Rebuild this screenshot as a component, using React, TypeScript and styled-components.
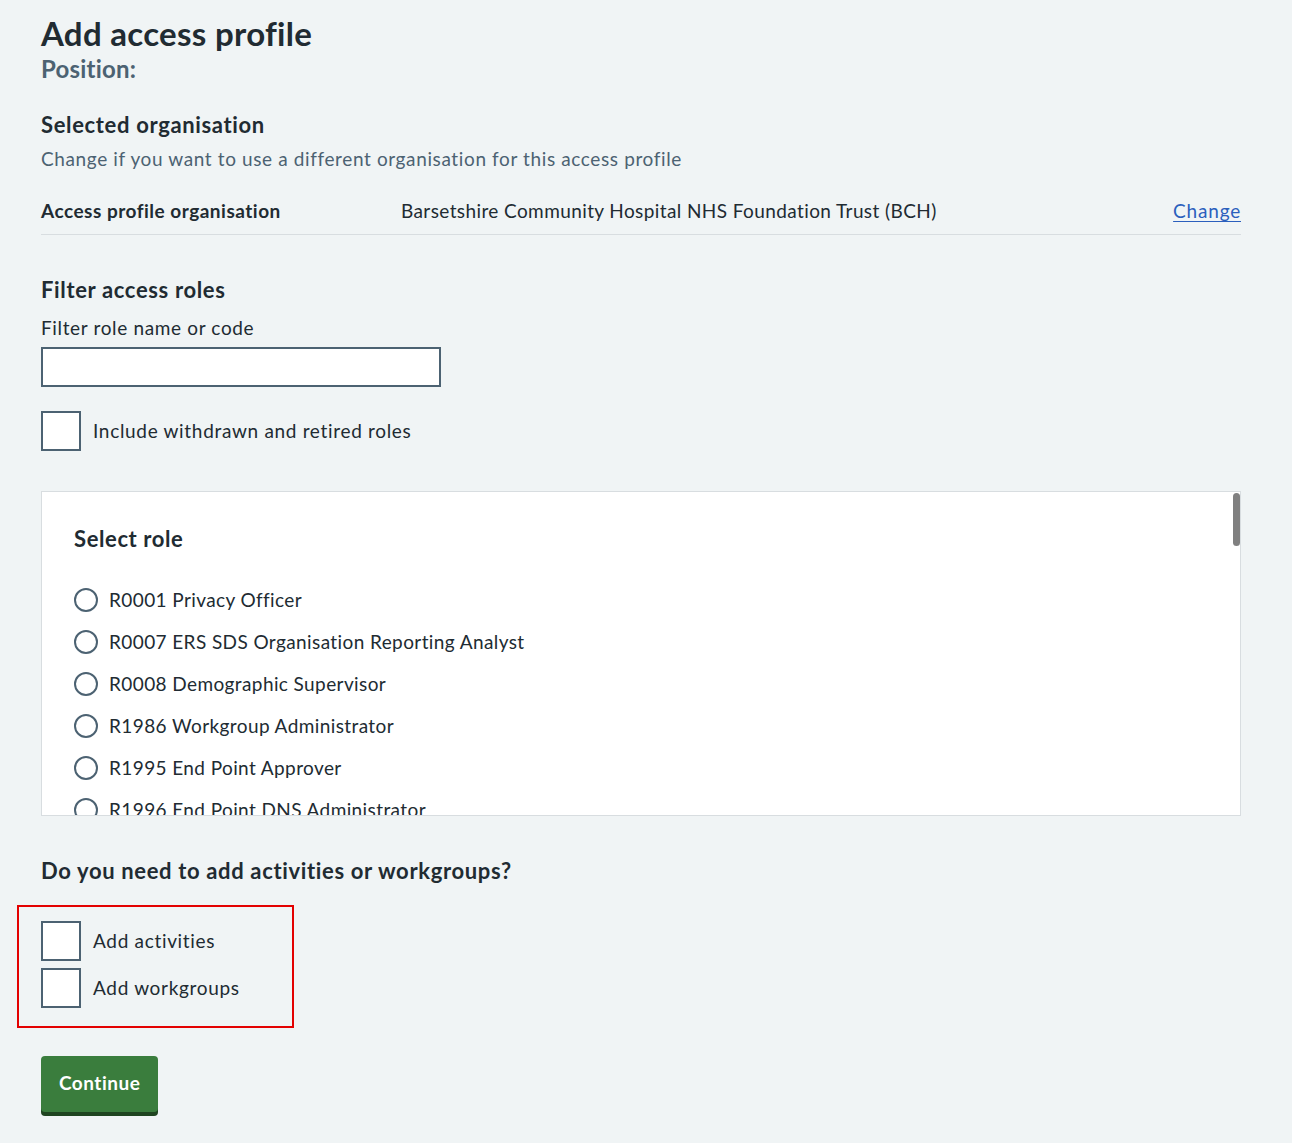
import styled, { createGlobalStyle } from 'styled-components';

const roles = [
  'R0001 Privacy Officer',
  'R0007 ERS SDS Organisation Reporting Analyst',
  'R0008 Demographic Supervisor',
  'R1986 Workgroup Administrator',
  'R1995 End Point Approver',
  'R1996 End Point DNS Administrator',
  'R1997 End Point Requester',
  'R1998 Registration Authority Manager',
  'R1999 Registration Authority Agent',
  'R5000 Sponsor',
  'R5010 Local Smartcard Administrator',
  'R5080 Referring Clinician',
  'R5090 Referring Admin',
  'R5100 Booking Admin',
  'R5110 Service Provider Clinician',
  'R5120 Service Provider Admin',
  'R5130 Service Provider Clinician Admin',
  'R5140 Service Definer',
  'R5150 Directory of Service Manager',
  'R5160 Pharmacist',
  'R5170 Dispenser',
  'R5180 Pharmacy Technician',
  'R5190 Registration Clerk',
  'R5200 Patient Services Clerk',
  'R5210 Medical Secretary',
  'R5220 Receptionist',
  'R5230 Clinical Coder',
  'R5240 Information Analyst',
  'R5250 Data Quality Officer',
  'R5260 Caldicott Guardian',
  'R5270 Records Manager',
  'R8000 Clinical Practitioner Access Role',
  'R8001 Nurse Access Role',
  'R8002 Nurse Manager Access Role',
  'R8003 Health Professional Access Role',
  'R8004 Healthcare Student Access Role',
  'R8005 Biomedical Scientist Access Role',
  'R8006 Medical Secretary Access Role',
  'R8007 Clinical Coder Access Role',
  'R8008 Admin/Clinical Support Access Role',
  'R8009 Receptionist Access Role',
  'R8010 Clerical Access Role',
  'R8011 Clerical Manager Access Role',
  'R8012 Information Officer Access Role',
  'R8013 Health Records Manager Access Role',
];

const GlobalStyle = createGlobalStyle`
  * { box-sizing: border-box; }
  body {
    margin: 0;
    background: #f0f4f5;
    color: #212b32;
    font-family: Lato, "Liberation Sans", Arial, sans-serif;
    letter-spacing: 0.5px;
  }
`;

const Page = styled.main`
  width: 1200px;
  margin-left: 41px;
  padding: 13px 0 28px;
`;

const Title = styled.h1`
  margin: 0;
  font-size: 33px;
  line-height: 40px;
  font-weight: 700;
  letter-spacing: 0.3px;
`;

const Caption = styled.div`
  font-size: 24px;
  line-height: 32px;
  font-weight: 700;
  color: #4c6272;
  letter-spacing: 0.2px;
`;

const Heading = styled.h2<{ $top: number }>`
  margin: ${(p) => p.$top}px 0 0;
  font-size: 22px;
  line-height: 30px;
  font-weight: 700;
  letter-spacing: 0.65px;
`;

const Hint = styled.p`
  margin: 5px 0 0;
  font-size: 19px;
  line-height: 28px;
  color: #4c6272;
  letter-spacing: 0.62px;
`;

const SummaryRow = styled.dl`
  display: flex;
  align-items: center;
  margin: 12px 0 0;
  padding: 12px 0 9px;
  border-bottom: 1px solid #d8dde0;
  font-size: 19px;
  line-height: 28px;
`;

const Key = styled.dt`
  width: 360px;
  font-weight: 700;
`;

const Value = styled.dd`
  flex: 1;
  margin: 0;
  letter-spacing: 0.4px;
`;

const ChangeLink = styled.a`
  color: #2b5fbd;
  text-decoration: underline;
  text-underline-offset: 3px;
  text-decoration-thickness: 1px;
  letter-spacing: 0.8px;
`;

const Label = styled.label`
  display: block;
  margin-top: 9px;
  font-size: 19px;
  line-height: 28px;
  letter-spacing: 0.65px;
`;

const TextInput = styled.input`
  display: block;
  margin-top: 5px;
  width: 400px;
  height: 40px;
  border: 2px solid #4c6272;
  background: #fff;
  font: inherit;
  font-size: 19px;
  padding: 4px;
`;

const CheckRow = styled.label<{ $top?: number }>`
  display: flex;
  align-items: center;
  gap: 12px;
  margin-top: ${(p) => p.$top ?? 0}px;
  font-size: 19px;
  line-height: 28px;
  letter-spacing: 0.68px;
`;

const CheckBox = styled.span`
  width: 40px;
  height: 40px;
  flex: none;
  border: 2px solid #4c6272;
  background: #fff;
`;

const PanelFrame = styled.div`
  position: relative;
  margin-top: 40px;
`;

const RolePanel = styled.div`
  height: 325px;
  overflow-y: auto;
  scrollbar-width: none;
  background: #fff;
  border: 1px solid #d8dde0;
  padding: 32px 32px 24px;
`;

const ScrollThumb = styled.div`
  position: absolute;
  top: 2px;
  right: 1px;
  width: 7px;
  height: 53px;
  border-radius: 4px;
  background: #808080;
`;

const PanelHeading = styled.h3`
  margin: 0 0 32px;
  font-size: 22px;
  line-height: 30px;
  font-weight: 700;
  letter-spacing: 0.6px;
`;

const RadioList = styled.div`
  display: flex;
  flex-direction: column;
  gap: 14px;
`;

const RadioRow = styled.label`
  display: flex;
  align-items: center;
  gap: 11px;
  font-size: 19px;
  line-height: 28px;
  letter-spacing: 0.4px;
`;

const RadioCircle = styled.span`
  width: 24px;
  height: 24px;
  flex: none;
  border: 2px solid #4c6272;
  border-radius: 50%;
  background: #fff;
`;

const Highlight = styled.div`
  display: flex;
  flex-direction: column;
  gap: 7px;
  width: 277px;
  margin: 19px 0 0 -24px;
  padding: 14px 0 18px 22px;
  border: 2px solid #e30000;
`;

const Button = styled.button`
  display: block;
  margin-top: 28px;
  padding: 13px 18px 15px;
  border: 0;
  border-radius: 4px;
  background: #3a7d3d;
  box-shadow: 0 4px 0 #1f4420;
  color: #fff;
  font-family: inherit;
  font-size: 19px;
  line-height: 28px;
  font-weight: 700;
  letter-spacing: 0.5px;
  cursor: pointer;
`;

export default function App() {
  return (
    <>
      <GlobalStyle />
      <Page>
        <Title>Add access profile</Title>
        <Caption>Position:</Caption>

        <Heading $top={25}>Selected organisation</Heading>
        <Hint>Change if you want to use a different organisation for this access profile</Hint>
        <SummaryRow>
          <Key>Access profile organisation</Key>
          <Value>Barsetshire Community Hospital NHS Foundation Trust (BCH)</Value>
          <ChangeLink href="#">Change</ChangeLink>
        </SummaryRow>

        <Heading $top={40}>Filter access roles</Heading>
        <Label htmlFor="filter">Filter role name or code</Label>
        <TextInput id="filter" type="text" />
        <CheckRow $top={24}>
          <CheckBox />
          Include withdrawn and retired roles
        </CheckRow>

        <PanelFrame>
          <RolePanel>
            <PanelHeading>Select role</PanelHeading>
            <RadioList>
              {roles.map((role) => (
                <RadioRow key={role}>
                  <RadioCircle />
                  {role}
                </RadioRow>
              ))}
            </RadioList>
          </RolePanel>
          <ScrollThumb />
        </PanelFrame>

        <Heading $top={40}>Do you need to add activities or workgroups?</Heading>
        <Highlight>
          <CheckRow>
            <CheckBox />
            Add activities
          </CheckRow>
          <CheckRow>
            <CheckBox />
            Add workgroups
          </CheckRow>
        </Highlight>

        <Button type="button">Continue</Button>
      </Page>
    </>
  );
}
